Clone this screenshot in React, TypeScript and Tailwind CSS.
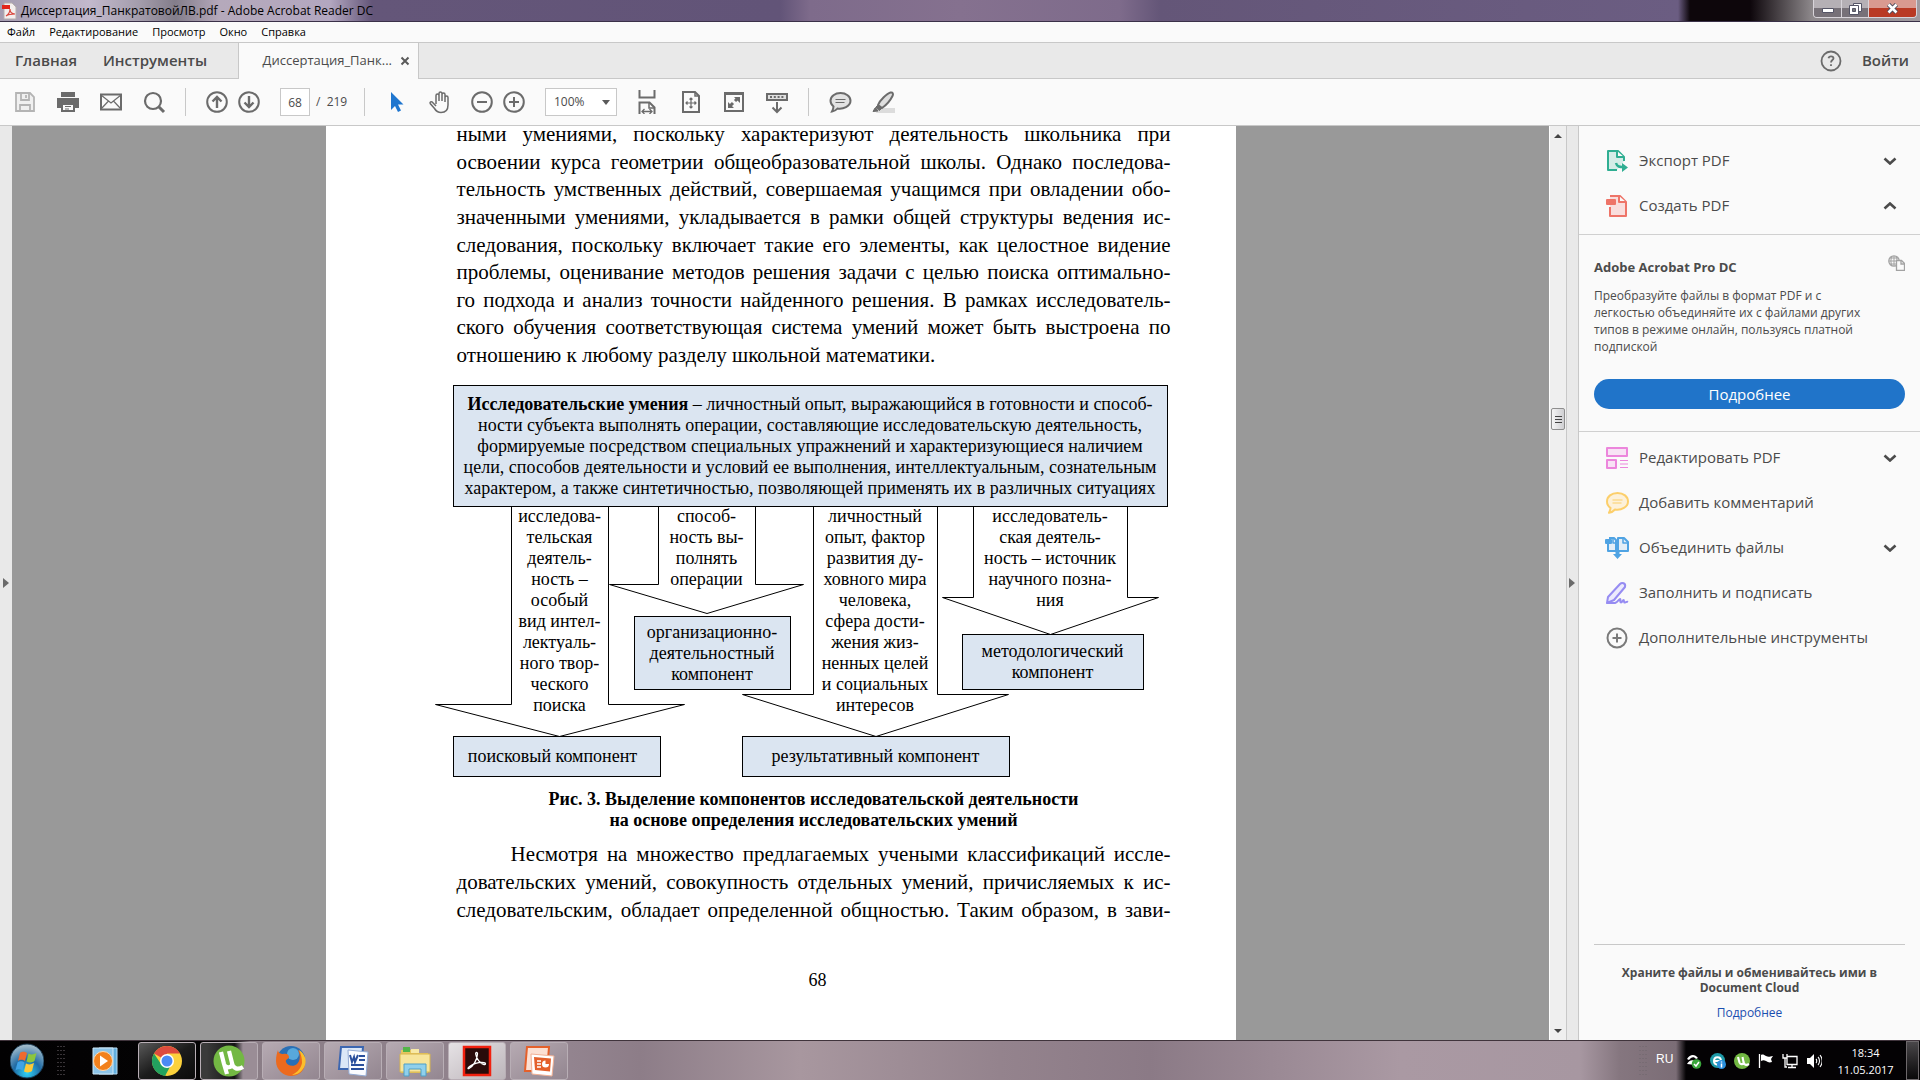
import type { ReactNode } from 'react';

const UI = "font-['Open_Sans','Noto_Sans',sans-serif]";
const SERIF = "font-['Liberation_Serif',serif]";

function IconButton({ label, className = '', children }: { label: string; className?: string; children: ReactNode }) {
  return (
    <button type="button" aria-label={label} className={`flex h-8 w-8 shrink-0 items-center justify-center ${className}`}>
      <svg width="24" height="24" viewBox="0 0 24 24" fill="none" stroke="#6b6b6b" strokeWidth="2" aria-hidden="true">
        {children}
      </svg>
    </button>
  );
}

function TitleBar() {
  return (
    <header className="relative flex h-[22px] shrink-0 items-center border-b border-[#3a3048] bg-[linear-gradient(90deg,#a49bb0_0px,#c2b9cc_90px,#a39cab_140px,#837d8a_175px,#b5a9bb_220px,#b3a7c0_330px,#645679_372px,#625478_780px,#7e6b8b_810px,#85718f_960px,#7e6b8b_1120px,#645678_1160px,#6b5d82_1678px,#0d060b_1690px,#0d060b_1750px,#8d888b_1812px,#a09ba0_100%)] pl-0.5">
      <svg width="16" height="18" viewBox="0 0 16 18" aria-hidden="true">
        <path d="M2 1h8l4 4v12H2z" fill="#f4eeee" stroke="#b5adad" />
        <path d="M0 3h8v4H0z" fill="#e2231a" />
        <path d="M4 14c3-2 4-4 4-7 0 3 2 5 5 5-3 0-6 0-9 2z" fill="none" stroke="#d8453c" strokeWidth="1.2" />
      </svg>
      <h1 className="ml-[3px] text-[12px] leading-5 whitespace-nowrap text-black">Диссертация_ПанкратовойЛВ.pdf - Adobe Acrobat Reader DC</h1>
      <div className="absolute top-0 right-[3px] flex h-[18px] overflow-hidden rounded-b-[4px] border border-t-0 border-[#d8d4da] text-white">
        <button type="button" aria-label="Свернуть" className="flex w-[28px] items-center justify-center border-r border-[#d8d4da] bg-linear-to-b from-[#b5b0b5] from-45% to-[#777178] to-50%">
          <svg width="12" height="6" viewBox="0 0 12 6" className="mt-[5px]"><path d="M.5.5h11v4H.5z" fill="#fff" stroke="#555566" /></svg>
        </button>
        <button type="button" aria-label="Восстановить" className="flex w-[27px] items-center justify-center border-r border-[#d8d4da] bg-linear-to-b from-[#b5b0b5] from-45% to-[#777178] to-50%">
          <svg width="13" height="12" viewBox="0 0 13 12" fill="#fff" stroke="#555566"><path d="M4.500 .5h8v8h-8z" /><path d="M.5 2.500h9v9h-9z" /><path d="M3.500 5.500h3v3h-3z" fill="#777" /></svg>
        </button>
        <button type="button" aria-label="Закрыть" className="flex w-[47px] items-center justify-center bg-linear-to-b from-[#d99a90] from-45% to-[#b93a24] to-50%">
          <svg width="13" height="11" viewBox="0 0 13 11"><path d="M2.500 1.500l8 8M10.500 1.500l-8 8" stroke="#4a4a5c" strokeWidth="4.500" /><path d="M2.500 1.500l8 8M10.500 1.500l-8 8" stroke="#fff" strokeWidth="2.600" /></svg>
        </button>
      </div>
    </header>
  );
}

function MenuBar() {
  return (
    <nav className="flex h-[21px] shrink-0 items-center gap-3.5 border-b border-[#c8c8c8] bg-[#fafafa] pl-[7px] text-[11px] text-black">
      {['Файл', 'Редактирование', 'Просмотр', 'Окно', 'Справка'].map((m) => (
        <button type="button" key={m}>{m}</button>
      ))}
    </nav>
  );
}

function TabBar() {
  return (
    <div className="flex h-9 shrink-0 bg-[#e9e9e9] text-[#4b4b4b]">
      <div className="flex w-[239px] items-center gap-[26px] border-r border-b border-[#c8c8c8] pl-[15px] text-[15px] font-semibold">
        <button type="button">Главная</button>
        <button type="button">Инструменты</button>
      </div>
      <div className="flex w-[179px] items-center justify-end gap-2 bg-[#fafafa] pr-2">
        <button type="button" className="text-[13px]">Диссертация_Панк...</button>
        <button type="button" aria-label="Закрыть вкладку">
          <svg width="10" height="10" viewBox="0 0 10 10"><path d="M1.500 1.500l7 7M8.500 1.500l-7 7" stroke="#5a5a5a" strokeWidth="2" /></svg>
        </button>
      </div>
      <div className="flex grow items-center justify-end gap-5 border-b border-l border-[#c8c8c8] pr-[11px]">
        <button type="button" aria-label="Справка">
          <svg width="22" height="22" viewBox="0 0 22 22" fill="none" stroke="#6b6b6b" strokeWidth="1.800">
            <circle cx="11" cy="11" r="9.500" />
            <path d="M8.500 8.300c.3-1.500 1.200-2 2.500-2s2.500.8 2.500 2c0 1.700-2.500 1.900-2.500 4.200M11 14.300v1.800" />
          </svg>
        </button>
        <button type="button" className="text-[15px] font-semibold">Войти</button>
      </div>
    </div>
  );
}

function Separator() {
  return <span className="mx-[15px] h-7 w-px shrink-0 bg-[#c8c8c8]" />;
}

function Toolbar() {
  return (
    <div className="flex h-[47px] shrink-0 items-center border-b border-[#c8c8c8] bg-[#fafafa] pl-[9px] text-[#4b4b4b]">
      <div className="flex gap-[11px]">
        <IconButton label="Сохранить">
          <g stroke="#b4b4b4" strokeWidth="1.800"><path d="M3 3h14l4 4v14H3z" fill="#f0f0f0" /><path d="M8 3v7h8V3M7 21v-6h10v6" /><path d="M13 5v3" /></g>
        </IconButton>
        <IconButton label="Печать">
          <path d="M5 2h14v5H5z" fill="#6b6b6b" stroke="none" /><path d="M1 8h22v10h-4v-4H5v4H1z" fill="#6b6b6b" stroke="none" />
          <path d="M6 14h12v7H6z" fill="#fafafa" /><path d="M9 16.500h6M9 19h4" strokeWidth="1" />
        </IconButton>
        <IconButton label="Отправить по почте">
          <path d="M2 4.500h20v15H2z" /><path d="M2 5l10 8 10-8M2 19l7.500-8M22 19l-7.500-8" strokeWidth="1.200" />
        </IconButton>
        <IconButton label="Найти">
          <circle cx="11" cy="11" r="8" strokeWidth="2.200" /><path d="M17 17l5 5" strokeWidth="3" />
        </IconButton>
      </div>
      <Separator />
      <IconButton label="Предыдущая страница"><circle cx="12" cy="12" r="9.800" /><path d="M12 18V7M7.500 11.500L12 7l4.500 4.500" strokeWidth="2.400" /></IconButton>
      <IconButton label="Следующая страница"><circle cx="12" cy="12" r="9.800" /><path d="M12 6v11M7.500 12.500L12 17l4.500-4.500" strokeWidth="2.400" /></IconButton>
      <input aria-label="Номер страницы" defaultValue="68" className="ml-[15px] h-7 w-[30px] border border-[#c8c8c8] bg-white text-center text-[12px]" />
      <span className="ml-1.5 w-[33px] text-[12px] whitespace-pre">/  219</span>
      <Separator />
      <IconButton label="Выделение"><path d="M7 2v18l4-4 3 6 3-1.500-3-6h5.500z" fill="#1f76cf" stroke="none" /></IconButton>
      <IconButton label="Рука" className="ml-3">
        <path d="M8 14V5.500a1.500 1.500 0 013 0V11 3.500a1.500 1.500 0 013 0V11 4.500a1.500 1.500 0 013 0V12 7.500a1.500 1.500 0 013 0V15c0 4-2 7.500-7 7.500-3.500 0-5-1.500-6.500-4L2.200 13.500c-.6-1.400 1-2.300 2.200-1.300L8 16" strokeWidth="1.500" />
      </IconButton>
      <IconButton label="Уменьшить" className="ml-2.5"><circle cx="12" cy="12" r="9.800" /><path d="M7 12h10" /></IconButton>
      <IconButton label="Увеличить"><circle cx="12" cy="12" r="9.800" /><path d="M7 12h10M12 7v10" /></IconButton>
      <div className="relative ml-[15px]">
        <select aria-label="Масштаб" className="block h-7 w-[72px] appearance-none border border-[#c8c8c8] bg-white pl-2 text-[12px]">
          <option>100%</option>
        </select>
        <svg width="8" height="5" viewBox="0 0 8 5" className="pointer-events-none absolute top-3 right-[7px]"><path d="M0 0h8L4 5z" fill="#5a5a5a" /></svg>
      </div>
      <IconButton label="По ширине" className="ml-3.5">
        <path d="M4.500 0v7.500h15V0M4.500 24V12.500h10l5 5V24" /><path d="M14 13v5h5" strokeWidth="1.500" /><path d="M7.500 21.500h9M9.500 19l-2.500 2.500L9.500 24M14.500 19l2.500 2.500-2.500 2.500" strokeWidth="1.300" />
      </IconButton>
      <IconButton label="Страница целиком" className="ml-3">
        <path d="M4 2h12l4 4v16H4z" /><path d="M16 2v4h4" strokeWidth="1.500" /><path d="M7 13h10M12 8v10M8.500 11.500L7 13l1.500 1.500M15.500 11.500L17 13l-1.500 1.500M10.500 9.500L12 8l1.500 1.500M10.500 16.500L12 18l1.500-1.500" strokeWidth="1.200" />
      </IconButton>
      <IconButton label="Во весь экран" className="ml-[11px]">
        <path d="M3 3h18v18H3z" /><path d="M2 3.500h20" strokeWidth="3" /><path d="M12 7h6v6zM6 12v6h6z" fill="#6b6b6b" stroke="none" /><path d="M13 11l3-3M8 16l3-3" strokeWidth="3" />
      </IconButton>
      <IconButton label="Показать панель" className="ml-[11px]">
        <path d="M2 4h20v6H2z" fill="#e0e0e0" /><path d="M5 7h14" strokeDasharray="2 1.800" /><path d="M12 12v10M7.500 17.500L12 22l4.500-4.500" />
      </IconButton>
      <Separator />
      <IconButton label="Добавить заметку">
        <path d="M12.500 3C7 3 2.500 6.300 2.500 10.800c0 2.700 1.300 4.400 3 5.700-.1 2-.7 3.500-1.500 5 2.500-.4 4.300-1.500 5.500-3 5.500.9 13-2 13-7.700C22.500 6.300 18 3 12.500 3z" fill="#e3e3e3" /><path d="M7.500 9.500h10M7.500 12.500h9" strokeWidth="1.200" />
      </IconButton>
      <IconButton label="Выделить текст" className="ml-[11px]">
        <path d="M7 18h17v5H5z" fill="#dcdcdc" stroke="none" /><path d="M7 15C9 10 16 3.500 19.500 2.500c2.500-.5 3 1.500 2 3.500-2 4-6 9-10.500 12z" fill="#dedede" /><path d="M7 15l4 3-2.500 2.500-4-3zM4 18l3 3-5 .5z" fill="#6b6b6b" strokeWidth="1" />
      </IconButton>
    </div>
  );
}

const INTRO = [
  'ными умениями, поскольку характеризуют деятельность школьника при',
  'освоении курса геометрии общеобразовательной школы. Однако последова-',
  'тельность умственных действий, совершаемая учащимся при овладении обо-',
  'значенными умениями, укладывается в рамки общей структуры ведения ис-',
  'следования, поскольку включает такие его элементы, как целостное видение',
  'проблемы, оценивание методов решения задачи с целью поиска оптимально-',
  'го подхода и анализ точности найденного решения. В рамках исследователь-',
  'ского обучения соответствующая система умений может быть выстроена по',
];

const OUTRO = [
  'Несмотря на множество предлагаемых учеными классификаций иссле-',
  'довательских умений, совокупность отдельных умений, причисляемых к ис-',
  'следовательским, обладает определенной общностью. Таким образом, в зави-',
];

const NODE = 'absolute flex items-center justify-center border border-black bg-[#dbe5f1] text-center';
const SHAFT = 'absolute top-[121px] text-center';

function Lines({ items }: { items: string[] }) {
  return <>{items.map((t) => <span key={t} className="block whitespace-nowrap">{t}</span>)}</>;
}

function Figure() {
  return (
    <figure className="mt-4 text-[18px] leading-[21px]">
      <div className="relative -ml-[22px] h-[393px] w-[733px]">
        <svg width="733" height="393" viewBox="0 0 733 393" fill="none" stroke="#000" strokeWidth="1" className="absolute inset-0" aria-hidden="true">
          <path d="M76.500 121v198.500H.5L124.500 351.500 249.500 319.500H173.500V121" />
          <path d="M223.500 121v78.500H174.500L272 228.500 368.500 199.500H320.500V121" />
          <path d="M378.500 121v188.500H307.500L441 351.500 573.500 309.500H502.500V121" />
          <path d="M538.500 121v91.500H507.500L615.500 249.500 723.500 212.500H692.500V121" />
        </svg>
        <div className={`${NODE} top-0 left-[18px] h-[122px] w-[715px] flex-col`}>
          <span className="whitespace-nowrap"><b>Исследовательские умения</b> – личностный опыт, выражающийся в готовности и способ-</span>
          <Lines items={[
            'ности субъекта выполнять операции, составляющие исследовательскую деятельность,',
            'формируемые посредством специальных упражнений и характеризующиеся наличием',
            'цели, способов деятельности и условий ее выполнения, интеллектуальным, сознательным',
            'характером, а также синтетичностью, позволяющей применять их в различных ситуациях',
          ]} />
        </div>
        <div className={`${SHAFT} left-[77px] w-[96px]`}>
          <Lines items={['исследова-', 'тельская', 'деятель-', 'ность –', 'особый', 'вид интел-', 'лектуаль-', 'ного твор-', 'ческого', 'поиска']} />
        </div>
        <div className={`${SHAFT} left-[224px] w-[96px]`}>
          <Lines items={['способ-', 'ность вы-', 'полнять', 'операции']} />
        </div>
        <div className={`${SHAFT} left-[379px] w-[123px]`}>
          <Lines items={['личностный', 'опыт, фактор', 'развития ду-', 'ховного мира', 'человека,', 'сфера дости-', 'жения жиз-', 'ненных целей', 'и социальных', 'интересов']} />
        </div>
        <div className={`${SHAFT} left-[539px] w-[153px]`}>
          <Lines items={['исследователь-', 'ская деятель-', 'ность – источник', 'научного позна-', 'ния']} />
        </div>
        <div className={`${NODE} top-[231px] left-[199px] h-[74px] w-[157px] flex-col`}>
          <Lines items={['организационно-', 'деятельностный', 'компонент']} />
        </div>
        <div className={`${NODE} top-[249px] left-[527px] h-[56px] w-[182px] flex-col`}>
          <Lines items={['методологический', 'компонент']} />
        </div>
        <div className={`${NODE} top-[351px] left-[18px] h-[41px] w-[208px] pr-2`}>поисковый компонент</div>
        <div className={`${NODE} top-[351px] left-[307px] h-[41px] w-[268px]`}>результативный компонент</div>
      </div>
      <figcaption className="mt-[11px] text-center font-bold">
        Рис. 3. Выделение компонентов исследовательской деятельности
        <br />
        на основе определения исследовательских умений
      </figcaption>
    </figure>
  );
}

function DocumentView() {
  return (
    <main className="flex min-w-0 grow overflow-hidden bg-[#999]">
      <button type="button" aria-label="Открыть панель навигации" className="flex w-3 shrink-0 items-center bg-[#e9e9e9] pl-[3px]">
        <svg width="6" height="10" viewBox="0 0 6 10"><path d="M0 0l6 5-6 5z" fill="#6b6b6b" /></svg>
      </button>
      <div className="flex grow justify-center">
        <article className={`w-[910px] shrink-0 bg-white pr-[65px] pl-[131px] text-black ${SERIF}`}>
          <p className="-mt-[5px] flex h-[248px] flex-col justify-between text-[21px] leading-[27px]">
            {INTRO.map((t) => <span key={t} className="block whitespace-nowrap [text-align-last:justify]">{t}</span>)}
            <span className="block">отношению к любому разделу школьной математики.</span>
          </p>
          <Figure />
          <p className="mt-2.5 flex h-[83px] flex-col justify-between text-[21px] leading-[27px]">
            {OUTRO.map((t) => <span key={t} className="block whitespace-nowrap [text-align-last:justify] first:pl-[54px]">{t}</span>)}
          </p>
          <p className="mt-[43px] pl-2 text-center text-[18px] leading-[27px]">68</p>
        </article>
      </div>
      <div className="flex w-[17px] shrink-0 flex-col items-center border-l border-white bg-[#efefef]">
        <svg width="8" height="4" viewBox="0 0 8 4" className="mt-2"><path d="M0 4h8L4 0z" fill="#444" /></svg>
        <div className="mt-[270px] flex h-[22px] w-[14px] flex-col items-center justify-center gap-0.5 rounded-[2px] border border-[#8e8e8e] bg-linear-to-r from-[#f5f5f5] to-[#cfcfd2]">
          <span className="h-px w-[7px] bg-[#444]" /><span className="h-px w-[7px] bg-[#444]" /><span className="h-px w-[7px] bg-[#444]" />
        </div>
        <svg width="8" height="4" viewBox="0 0 8 4" className="mt-auto mb-[7px]"><path d="M0 0h8L4 4z" fill="#444" /></svg>
      </div>
    </main>
  );
}

const DownGlyph = 'M1.500 1.500L7 6.500l5.500-5';
const UpGlyph = 'M1.500 6.500L7 1.500l5.500 5';

function Tool({ label, chevron, icon }: { label: string; chevron?: 'up' | 'down'; icon: ReactNode }) {
  return (
    <button type="button" className="flex h-[45px] w-full items-center pr-[23px] pl-[26px] text-left text-[15px]">
      <svg width="24" height="24" viewBox="0 0 24 24" fill="none" strokeWidth="2" strokeLinejoin="round" aria-hidden="true">{icon}</svg>
      <span className="ml-[10px] grow whitespace-nowrap">{label}</span>
      {chevron && (
        <svg width="14" height="8" viewBox="0 0 14 8" fill="none" stroke="#4b4b4b" strokeWidth="2.600"><path d={chevron === 'up' ? UpGlyph : DownGlyph} /></svg>
      )}
    </button>
  );
}

function ToolsPanel() {
  return (
    <aside className="flex w-[354px] shrink-0 border-l border-[#c8c8c8] bg-[#fafafa] text-[#4b4b4b]">
      <button type="button" aria-label="Свернуть панель инструментов" className="flex w-[11px] shrink-0 items-center bg-[#e9e9e9] pl-0.5">
        <svg width="6" height="10" viewBox="0 0 6 10"><path d="M0 0l6 5-6 5z" fill="#6b6b6b" /></svg>
      </button>
      <div className="flex grow flex-col border-l border-[#c8c8c8]">
        <div className="border-b border-[#d0d0d0] pt-3 pb-[6px]">
          <Tool label="Экспорт PDF" chevron="down" icon={<g stroke="#2fae92"><path d="M12 21H3V2h10l6 6v4" fill="#d5ece7" /><path d="M12 2v6h7" fill="#fafafa" /><path d="M11 14c1 4 4 4 7 4" strokeWidth="2.500" /><path d="M17 14l6 4.500-6 4.500z" fill="#2fae92" stroke="none" /></g>} />
          <Tool label="Создать PDF" chevron="up" icon={<g stroke="#ee7468"><path d="M5 13v9h16V8l-6-6H5" fill="#f9dedd" /><path d="M14 2v6h7" fill="#fafafa" /><rect x="1" y="5" width="10" height="6" rx="1" fill="#ee7468" stroke="none" /></g>} />
        </div>
        <section className="border-b border-[#d0d0d0] px-[15px] pt-[21px] pb-[22px]">
          <div className="flex items-start justify-between">
            <h2 className="text-[13px] leading-[22px] font-bold">Adobe Acrobat Pro DC</h2>
            <svg width="17" height="16" viewBox="0 0 17 16" fill="none" stroke="#a2a2a2" strokeWidth="1.300" className="mt-[-1px]"><circle cx="6" cy="6" r="5.200" /><path d="M1 6h10M2 3h8M2 9h7M6 1v10M4 1.500c-1.500 3-1.500 6 0 9M8 1.500c1.500 3 1.500 6 0 9" strokeWidth="1" /><path d="M8.500 5.500h5l3 3v7h-8z" fill="#fafafa" /><path d="M13 6v3h3" /></svg>
          </div>
          <p className="mt-[9px] w-[285px] text-[12px] leading-[17px]">
            Преобразуйте файлы в формат PDF и с<br />легкостью объединяйте их с файлами других<br />типов в режиме онлайн, пользуясь платной<br />подпиской
          </p>
          <button type="button" className="mt-6 h-[30px] w-full rounded-full bg-[#2074c9] text-[15px] leading-[30px] text-white">Подробнее</button>
        </section>
        <div className="pt-[3px]">
          <Tool label="Редактировать PDF" chevron="down" icon={<g stroke="#ec86dc"><path d="M2 2h20v8H2zM2 14h9v8H2z" fill="#f8e3f5" /><path d="M15 14.500h8M15 18h8M15 21.500h8" strokeWidth="1.200" /></g>} />
          <Tool label="Добавить комментарий" icon={<g stroke="#fccf6b"><path d="M12.500 2C6.500 2 2 5.500 2 10.500c0 3 1.500 5 3.500 6.300 0 2-.7 3.500-1.500 5 2.500-.4 4.500-1.600 6-3.300C16.500 19.500 23 16 23 10.500 23 5.500 18.500 2 12.500 2z" fill="#fdf1d9" /><path d="M7.500 9h10M7.500 12h9" strokeWidth="1.200" /></g>} />
          <Tool label="Объединить файлы" chevron="down" icon={<g stroke="#4fa3e3"><path d="M3 8v7h8V4L9 2H4M13 15h10V6l-4-4h-6v13" fill="#e3eef7" /><path d="M8 3v4h4M18 3v4h4" strokeWidth="1.500" /><rect x="0" y="3" width="7" height="5" rx="1" fill="#4fa3e3" stroke="none" /><path d="M10.500 14h4v4H17l-4.500 5L8 18h2.500z" fill="#4fa3e3" stroke="none" /></g>} />
          <Tool label="Заполнить и подписать" icon={<g stroke="#968cf2"><path d="M3 16L15 3c2-2 6-1 5 3L9 19l-7 3z" fill="#eceafd" /><path d="M2 22h8c3-1 4-4 5-4s-.5 3.500 1 3.500 1.500-2.500 2.500-2.500 0 3 1.500 2.500 2-1 3-.5" /></g>} />
          <Tool label="Дополнительные инструменты" icon={<g stroke="#7a7a7a"><circle cx="12" cy="12" r="9.500" /><path d="M7.500 12h9M12 7.500v9" /></g>} />
        </div>
        <footer className="mx-[15px] mt-auto border-t border-[#c8c8c8] pt-5 pb-5 text-center">
          <h2 className="text-[12px] leading-[15px] font-bold">Храните файлы и обменивайтесь ими в<br />Document Cloud</h2>
          <a href="#cloud" className="mt-2.5 block text-[12px] leading-[15px] text-[#1a4fb0]">Подробнее</a>
        </footer>
      </div>
    </aside>
  );
}

function TaskButton({ label, tone, children }: { label: string; tone: string; children: ReactNode }) {
  return (
    <button type="button" aria-label={label} className={`flex h-[38px] w-[58px] items-center justify-center rounded-[3px] border border-[#b8aeb5] ${tone}`}>
      <svg width="32" height="32" viewBox="0 0 32 32" aria-hidden="true">{children}</svg>
    </button>
  );
}

function Grip() {
  return (
    <svg width="8" height="32" viewBox="0 0 8 32" aria-hidden="true">
      <path d="M1 1v30M4 1v30M7 1v30" stroke="#6f666c" strokeWidth="1" strokeDasharray="1 3" />
    </svg>
  );
}

const DARK = 'bg-linear-to-br from-[#5a5a5a] via-[#1c1c1c] to-[#0b0b0b]';
const MAUVE = 'bg-linear-to-br from-[#b6aab2] to-[#938690]';

function Taskbar() {
  return (
    <footer className="flex h-10 shrink-0 items-center border-t border-[#40343c] bg-[linear-gradient(90deg,#020102_0px,#050405_235px,#8a7d86_250px,#948590_560px,#8d7d88_640px,#a8979f_800px,#94838d_1000px,#8b7a86_1150px,#aa99a3_1400px,#a797a1_1580px,#85767f_1620px,#7b6d76_1676px,#040204_1686px,#040204_100%)] pl-[10px]">
      <button type="button" aria-label="Пуск">
        <svg width="34" height="36" viewBox="0 0 34 36">
          <defs><radialGradient id="orb" cx="50%" cy="85%" r="80%"><stop offset="0" stopColor="#2fd3f5" /><stop offset=".5" stopColor="#1f6ba5" /><stop offset="1" stopColor="#9fb9c9" /></radialGradient></defs>
          <circle cx="17" cy="18" r="17" fill="url(#orb)" stroke="#17384f" />
          <g transform="translate(1 0)">
            <path d="M9 10c3-2 5-1 7 0l-2 8c-2-1-4-2-7 0z" fill="#ef6a2f" /><path d="M17.500 10.500c3 1.500 5 1 8-.5l-2 8c-3 2-5 1.500-8 .5z" fill="#8cc63e" />
            <path d="M6.500 19.500c3-2 5-1 7 0l-2 8c-2-1-4-2-7 0z" fill="#3fa3e6" /><path d="M15 20.500c3 1.500 5 1 8-.5l-2 8c-3 2-5 1.500-8 .5z" fill="#fcc938" />
          </g>
        </svg>
      </button>
      <span className="ml-[13px]"><Grip /></span>
      <button type="button" aria-label="Проигрыватель" className="mr-[19px] ml-[26px]">
        <svg width="28" height="30" viewBox="0 0 28 30"><path d="M8 2h18v26H8z" fill="#62aede" stroke="#b7dcf3" /><path d="M2 2h20v26H2z" fill="#8cc4e8" stroke="#cfe8f7" /><circle cx="12" cy="15" r="9.500" fill="#f2811d" stroke="#ffd9ae" /><path d="M9 9.500l8 5.500-8 5.500z" fill="#fff" /></svg>
      </button>
      <div className="flex gap-1">
        <TaskButton label="Chrome" tone={DARK}>
          <circle cx="16" cy="16" r="15" fill="#fcd13c" /><path d="M16 16L3 8.500A15 15 0 0129 8.500H16z" fill="#dd4b3e" /><path d="M3 8.500A15 15 0 0014 31l6-11-4-4-6 3z" fill="#23a25f" /><circle cx="16" cy="16" r="7" fill="#fff" /><circle cx="16" cy="16" r="5.500" fill="#4a8af4" />
        </TaskButton>
        <TaskButton label="µTorrent" tone="bg-linear-to-r from-[#3a3a3a] from-10% via-[#151515] via-60% to-[#9a8d96] to-75%">
          <circle cx="16" cy="16" r="15.500" fill="#73b843" /><path d="M8 7l3 12c1.500 5 9 4 8-1L16 6M19 18c1 6 6 7 11 4M11 19l3 10" fill="none" stroke="#fff" strokeWidth="4.200" />
        </TaskButton>
        <TaskButton label="Firefox" tone={MAUVE}>
          <circle cx="16" cy="15" r="14" fill="#2a6fb5" /><circle cx="18" cy="9" r="6" fill="#58a8dc" /><path d="M3 5c0 3 3 4 5 4 3-1 6 0 6 3 0 2-4 2-3 5 1 4 8 5 11 2s4-8 1-14c5 3 8 8 7 14-1 8-7 12-14 12S1 25 1 16C1 11 2 8 3 5z" fill="#ec6a1e" /><path d="M24 5c5 3 8 9 6 15-2 6-7 10-13 10 6-3 9-7 10-12 0-5-1-9-3-13z" fill="#fbbf2c" />
        </TaskButton>
        <TaskButton label="Word" tone={MAUVE}>
          <path d="M4 2h22l-2 22H2z" fill="#dbe7f7" stroke="#3c66b0" strokeWidth="2" /><path d="M11 5l20 2-2 24-17-2z" fill="#fbfcff" stroke="#94abd4" /><path d="M13 10l2 7 2-5 1 5 3-7" fill="none" stroke="#2a4f9c" strokeWidth="2" /><path d="M22 11h6M22 15h6M14 20h13M14 24h13" stroke="#2a4f9c" strokeWidth="2" />
        </TaskButton>
        <TaskButton label="Проводник" tone={MAUVE}>
          <path d="M2 5h10l2 3h15v20H2z" fill="#e7c65e" /><path d="M4 2h7v5H4z" fill="#53b548" /><path d="M12 4h8v4h-8z" fill="#f7e9a6" /><path d="M1 9h30v18H1z" fill="#f7e59b" stroke="#d7b54e" /><path d="M5 31V19h22v12h-5v-7H10v7z" fill="#8fd0ec" stroke="#4f9fc6" />
        </TaskButton>
        <TaskButton label="Acrobat Reader" tone="bg-linear-to-br from-[#e6e2e5] to-[#bcb5ba]">
          <path d="M3 2h26v28H3z" fill="#2a0b0a" stroke="#f1200f" strokeWidth="2.500" />
          <path d="M8 23.500c4-2 8-8 8.500-14.500.1-2-2-2-1.800 0 .4 4 4.500 10 8.300 10.500 2 .2 2-1.600 0-1.900-4-.5-10 1-14.500 3.900-2 1.400-1.800 2.600-.5 2z" fill="none" stroke="#fff" strokeWidth="1.300" />
        </TaskButton>
        <TaskButton label="PowerPoint" tone={MAUVE}>
          <path d="M4 2h22l-2 24H2z" fill="#fbe0d3" stroke="#e4602b" strokeWidth="2" /><path d="M8 9l23 2-2 20-20-2z" fill="#fff" stroke="#f2b195" /><path d="M11 12l17 1.500-1 13-15-1.500z" fill="#e4602b" /><path d="M14 16h4M14 19h4M14 22h4" stroke="#fff" strokeWidth="1.500" /><circle cx="22.500" cy="19" r="3.500" fill="#fff" /><path d="M22.500 19V15H27v4z" fill="#e4602b" />
        </TaskButton>
      </div>
      <div className="ml-auto flex h-full items-center text-[12px] text-white">
        <Grip />
        <span className="ml-[9px] w-[17px] pb-1 font-['Liberation_Sans',sans-serif] text-[12px]">RU</span>
        <div className="ml-[13px] flex gap-2">
          <svg width="16" height="16" viewBox="0 0 16 16"><path d="M1 6c3-5 8-5 11-1l-2 1C8 3 5 4 3 7zM1 11c2-4 6-5 9-2v3z" fill="#fff" /><circle cx="10.500" cy="11" r="4.800" fill="#3aa53b" /><path d="M8 11l2 2 3-4" fill="none" stroke="#fff" strokeWidth="1.500" /></svg>
          <svg width="16" height="16" viewBox="0 0 16 16"><circle cx="7.500" cy="7.500" r="7.500" fill="#1e9aa8" /><path d="M4 8h7c0-5-7-5-7 0 0 4 4 4 6 3" fill="none" stroke="#fff" strokeWidth="2" /><circle cx="11.500" cy="11.500" r="4.500" fill="#2a8fdd" /><path d="M11.500 8.500v1M11.500 10.500v4" stroke="#fff" strokeWidth="1.500" /></svg>
          <svg width="16" height="16" viewBox="0 0 16 16"><circle cx="8" cy="8" r="8" fill="#73b843" /><path d="M4 4l1.500 5.500c.8 2.500 4.500 2 4-.5L8.500 4M9.500 9c.5 3 3 3.500 5.500 2" fill="none" stroke="#fff" strokeWidth="2.100" /></svg>
          <svg width="16" height="16" viewBox="0 0 16 16"><path d="M1.500 1v14" stroke="#fff" strokeWidth="1.300" /><path d="M3 2c2-1 3 0 5 1s3 1 7 0l-2 3 1 3c-3 1-4 0-6-1s-3-1-5 0z" fill="#fff" /></svg>
          <svg width="16" height="16" viewBox="0 0 16 16" fill="none" stroke="#fff" strokeWidth="1.300"><path d="M5 3.500h10v8H5zM10 12v2.500M6 14.500h8M1 1v4h4V1M3 5v9h2" /></svg>
          <svg width="16" height="16" viewBox="0 0 16 16"><path d="M1 5h3l4-4v14l-4-4H1z" fill="#fff" /><path d="M10 6c1 1 1 3 0 4M12 4c2 2 2 6 0 8M14 2c3 4 3 8 0 12" fill="none" stroke="#fff" strokeWidth="1.100" /></svg>
        </div>
        <div className="w-[84px] pl-[3px] text-center text-[11px] leading-[17px]">18:34<br />11.05.2017</div>
        <button type="button" aria-label="Показать рабочий стол" className="mr-px h-full w-[13px] border border-[#6d686b] bg-linear-to-b from-[#4a474a] to-[#0a090a]" />
      </div>
    </footer>
  );
}

export default function App() {
  return (
    <div className={`flex h-screen flex-col overflow-hidden ${UI}`}>
      <TitleBar />
      <MenuBar />
      <TabBar />
      <Toolbar />
      <div className="flex min-h-0 grow">
        <DocumentView />
        <ToolsPanel />
      </div>
      <Taskbar />
    </div>
  );
}
